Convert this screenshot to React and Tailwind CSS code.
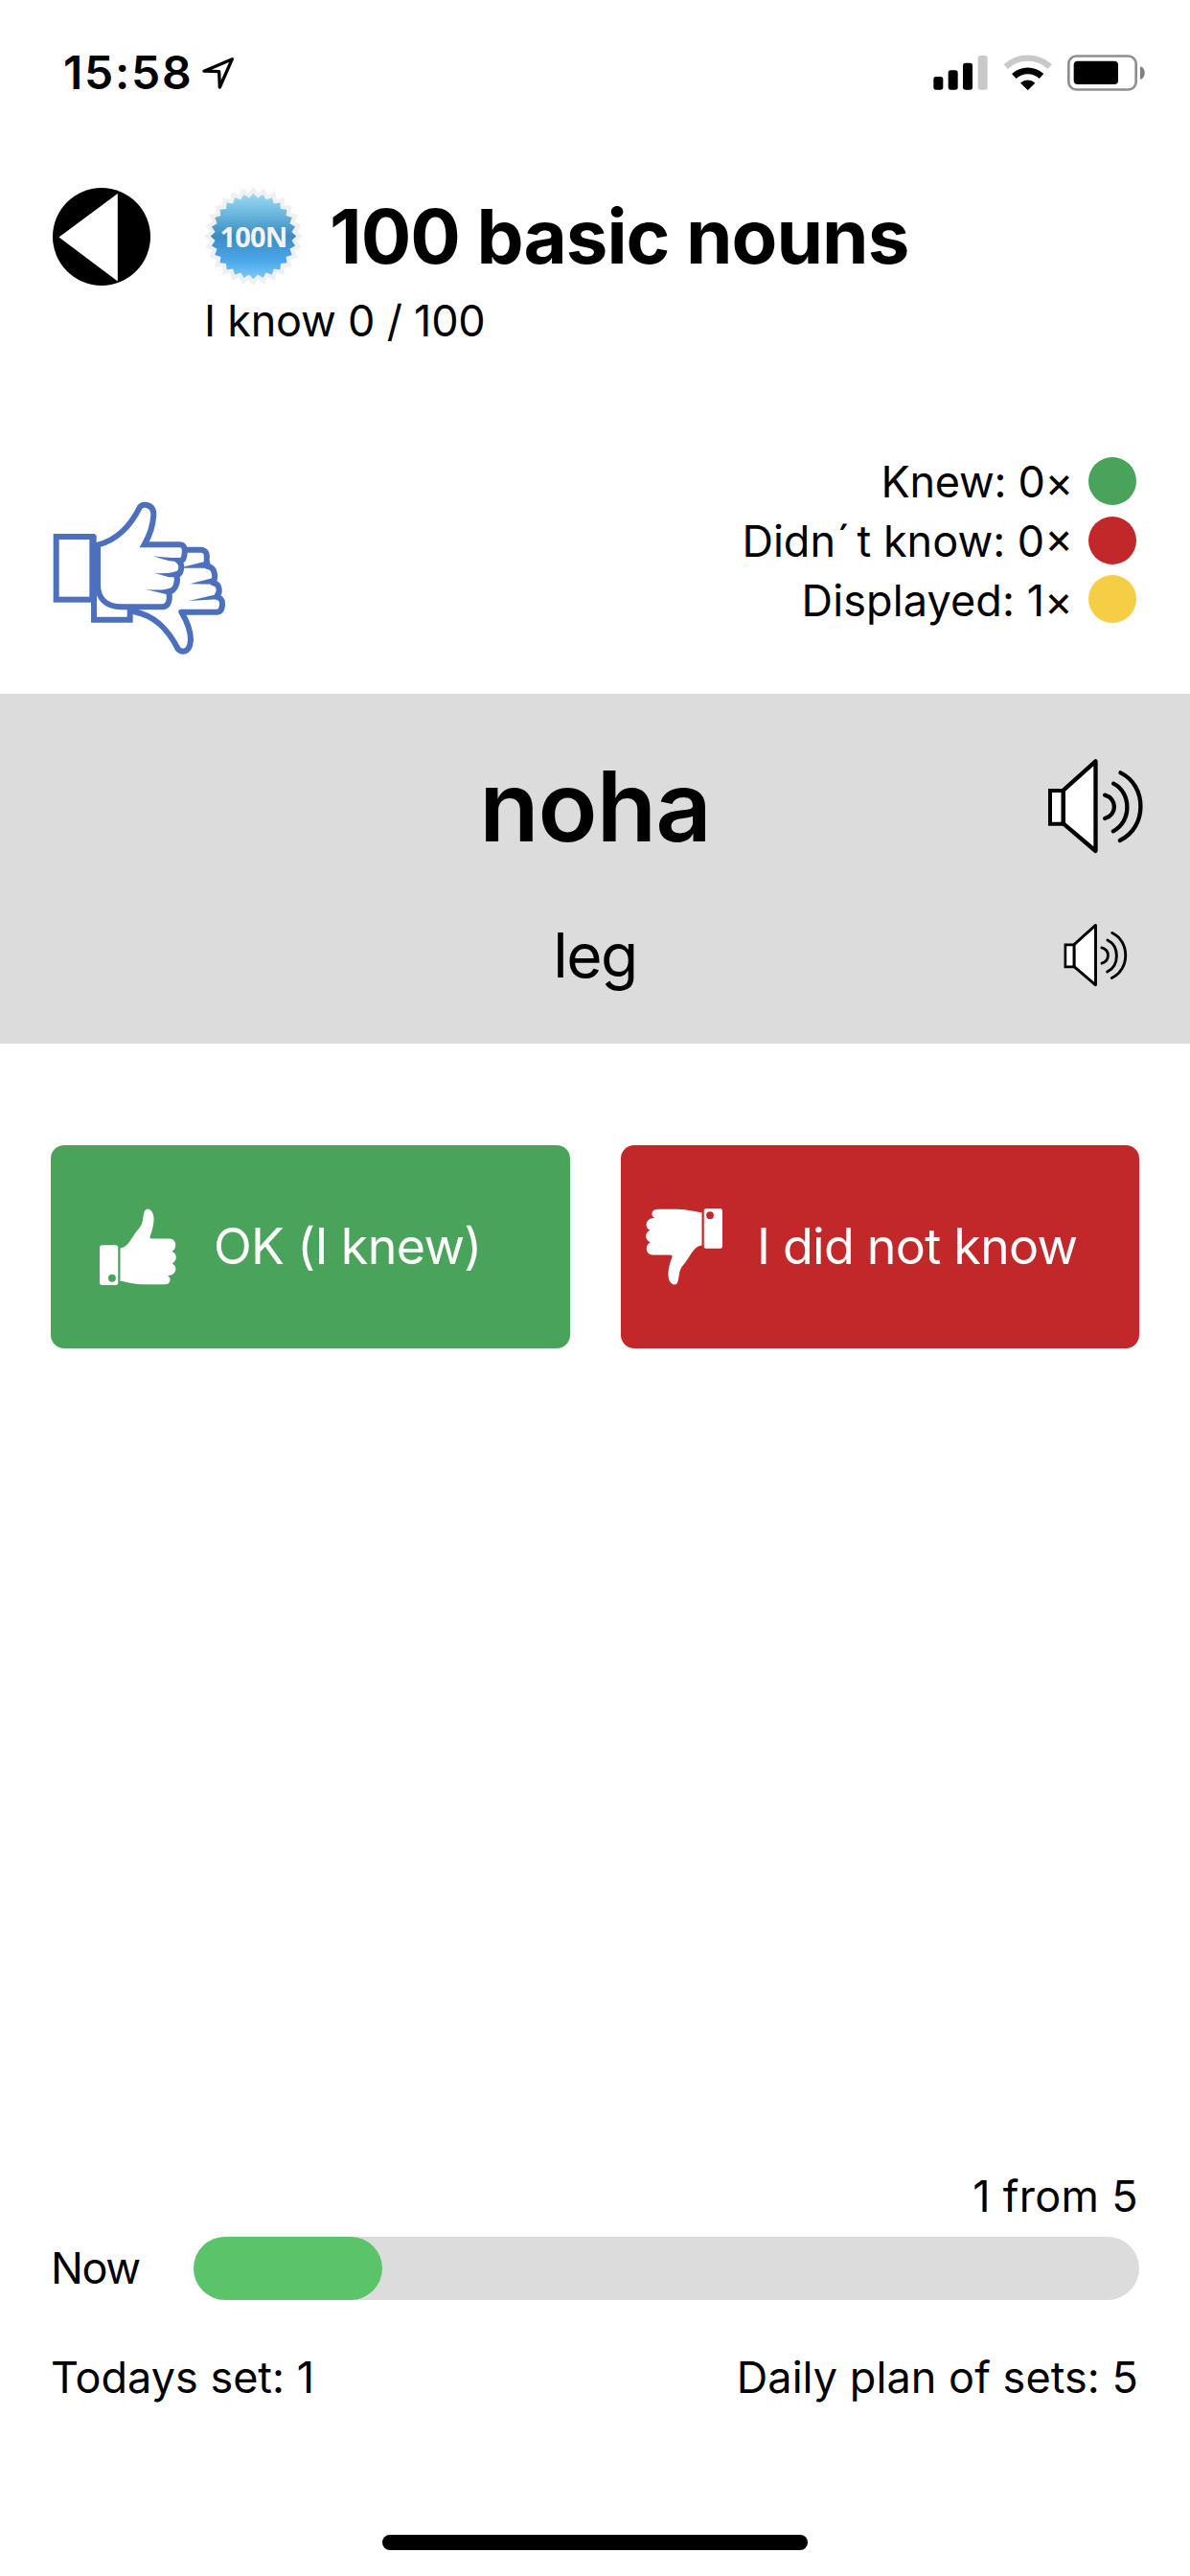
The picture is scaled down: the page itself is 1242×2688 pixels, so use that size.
import React from "react";

const BLUE = "#4c70be";

function LocationArrow() {
  return (
    <svg className="ml-[9px] h-[34px] w-[34px]" viewBox="634 86 102 102" fill="none">
      <path d="M640 131.500L728 94L689 182L687 133Z" stroke="#000" strokeWidth="10" strokeLinejoin="round" />
    </svg>
  );
}

function StatusIcons() {
  return (
    <div className="flex items-center">
      <svg className="h-[38px] w-[58px]" viewBox="100 82 174 114">
        <rect x="101" y="151" width="30" height="41" rx="8" />
        <rect x="147" y="131" width="30" height="61" rx="8" />
        <rect x="193" y="108" width="30" height="84" rx="8" />
        <rect x="240" y="85" width="30" height="107" rx="8" fill="#c9c9c9" />
      </svg>
      <svg className="ml-[15px] h-[38px] w-[51px]" viewBox="319 80 153 114" fill="none">
        <path d="M327 118A101 101 0 0 1 465 118" stroke="#c9c9c9" strokeWidth="19" />
        <path d="M353 147.500A63 63 0 0 1 439 147.500" stroke="#000" strokeWidth="20" />
        <path d="M396 190L374.500 169A33 33 0 0 1 417.500 169Z" fill="#000" stroke="#000" strokeWidth="3" strokeLinejoin="round" />
      </svg>
      <svg className="ml-[16px] h-[38px] w-[82px]" viewBox="522 81 246 114">
        <rect x="526" y="85.500" width="211" height="105" rx="24" fill="none" stroke="#8f8f8f" strokeWidth="8" />
        <rect x="542" y="101" width="139" height="73" rx="12" />
        <path d="M750 118C769 123 769 152 750 159Z" fill="#808080" />
      </svg>
    </div>
  );
}

function starPoints(outer, inner, count) {
  const pts = [];
  for (let i = 0; i < count * 2; i++) {
    const r = i % 2 ? inner : outer;
    const a = (Math.PI * i) / count - Math.PI / 2;
    pts.push(`${(r * Math.cos(a)).toFixed(2)},${(r * Math.sin(a)).toFixed(2)}`);
  }
  return pts.join(" ");
}

function Badge() {
  return (
    <div className="ml-[56px] grid h-[103px] w-[103px] place-items-center">
      <svg className="col-start-1 row-start-1 h-[103px] w-[103px]" viewBox="-51.500 -51.500 103 103">
        <defs>
          <linearGradient id="badge" x1="0" y1="0" x2="0" y2="1">
            <stop offset="0" stopColor="#9bdaf3" />
            <stop offset="0.25" stopColor="#69b5dc" />
            <stop offset="0.5" stopColor="#3c8cc4" />
            <stop offset="0.78" stopColor="#4aa6e8" />
            <stop offset="1" stopColor="#7ccbf8" />
          </linearGradient>
        </defs>
        <polygon points={starPoints(51.5, 45.5, 28)} fill="#f0f0f0" />
        <polygon points={starPoints(44.7, 40.2, 28)} fill="url(#badge)" />
      </svg>
      <span className="col-start-1 row-start-1 font-['Open_Sans'] text-[29px] font-bold leading-none tracking-[-0.8px] text-[#f3f3f3]">
        100N
      </span>
    </div>
  );
}

function ThumbPair() {
  return (
    <svg className="mt-[52px] h-[161px] w-[181px]" viewBox="75 70 543 483" fill="none" strokeLinejoin="miter">
      <g stroke={BLUE} strokeWidth="18">
        <path d="M204 360V441H317V395" />
        <path
          d="M328 415C395 428 435 470 467 532Q476 542 487 540C502 536 506 522 507 505C507 470 492 440 478 417H588C601 417 606 406 606 390C606 376 597 370 588 369C603 352 596 328 578 326C588 300 580 276 560 274C562 268 556 262 557 250C560 232 552 222 538 222H480L400 330Z"
          fill="#fff"
          strokeLinejoin="round"
        />
      </g>
      <g fill={BLUE}>
        <path d="M470 279L560 257L566 279Z" />
        <path d="M505 329L586 308V330Z" />
        <path d="M501 382L594 360V377Z" />
      </g>
      <g stroke={BLUE} strokeWidth="18">
        <rect x="86" y="181" width="113" height="197" fill="#fff" />
        <path
          d="M216 207C270 193 315 155 348 88Q355 80 365 81C384 83 391 95 391 112C389 150 377 180 362 206H472C486 206 490 216 488 232C488 246 482 256 472 260C482 270 479 296 463 303C469 322 460 348 439 355C444 382 436 400 420 401H290C240 400 216 372 216 330Z"
          fill="#fff"
        />
        <path d="M207 176V372" strokeWidth="10" />
      </g>
      <g fill={BLUE}>
        <path d="M389 241C410 246 440 247 478 247L474 266Q460 257 440 257Q420 252 389 241Z" />
        <path d="M393 295Q430 297 450 293L472 286L464 308H440Z" />
        <path d="M366 346Q410 349 428 346L460 337L446 361H430Z" />
      </g>
    </svg>
  );
}

function Speaker({ className }) {
  return (
    <svg className={className} viewBox="100 90 302 300" fill="none" stroke="#000" strokeLinecap="round" strokeLinejoin="round">
      <path d="M150 191L251 100V381L150 295Z" fill="#fff" strokeWidth="13" />
      <path d="M108.500 192H149V296H108.500Z" fill="#fff" strokeWidth="12" strokeLinejoin="miter" />
      <g strokeWidth="13">
        <path d="M280 206C319 217 319 268 280 279" />
        <path d="M307 170C364 198 364 290 306 319" />
        <path d="M329 136C413 176 413 308 327 348" />
      </g>
    </svg>
  );
}

function Thumb({ className }) {
  return (
    <svg className={className} viewBox="172 242 216 241" preserveAspectRatio="none" fill="#fff">
      <path
        fillRule="evenodd"
        d="M180 357H217Q224 357 224 365V475Q224 483 217 483H180Q172 483 172 475V365Q172 357 180 357ZM207 449A10.500 12 0 1 0 207 473A10.500 12 0 1 0 207 449Z"
      />
      <path d="M230 367C253 364 259 338 277 313C296 289 291 285 297 257C299 240 312 239 320 253C330 274 322 306 314 330Q312 336 318 337H369C390 338 391 369 375 377C391 383 392 406 376 415C392 422 391 452 363 454C373 459 372 470 367 476Q364 481 354 481H300C265 480 245 472 230 470Z" />
    </svg>
  );
}

const stats = [
  { id: "knew", text: "Knew: 0×", dot: "bg-[#4aa35b]", tracking: "tracking-[-0.3px]" },
  {
    id: "missed",
    text: (
      <>
        Didn<span className="ml-[1px] mr-[7px]">´</span>t know: 0×
      </>
    ),
    dot: "bg-[#c2272a]",
    tracking: "tracking-normal",
  },
  { id: "shown", text: "Displayed: 1×", dot: "bg-[#f5ce46]", tracking: "tracking-[0.1px]" },
];

export default function App() {
  return (
    <div className="flex h-[2688px] w-[1242px] flex-col overflow-hidden bg-white font-['Inter',sans-serif] text-[45px] leading-[54px] text-black">
      <header className="flex h-[152px] items-center justify-between pl-[66px] pr-[46px]">
        <div className="flex items-center">
          <span className="text-[48px] font-semibold tracking-[1.760px]">15:58</span>
          <LocationArrow />
        </div>
        <StatusIcons />
      </header>

      <div className="mt-[43px] flex h-[103px] items-center pl-[55px]">
        <svg className="h-[102px] w-[102px]" viewBox="0 0 102 102">
          <circle cx="51" cy="51" r="51" />
          <path d="M6.500 51.500L67.800 6V97.500Z" fill="#fff" />
        </svg>
        <Badge />
        <h1 className="ml-[28px] whitespace-nowrap text-[78px] font-bold leading-[94px] tracking-[-0.970px]">100 basic nouns</h1>
      </div>
      <p className="mt-[10px] pl-[213px] tracking-[-0.230px]">I know 0 / 100</p>

      <section className="mt-[109px] flex h-[253px] items-start justify-between pl-[55px] pr-[56px]">
        <ThumbPair />
        <ul>
          {stats.map((s) => (
            <li key={s.id} className="flex h-[61.700px] items-center justify-end">
              <span className={`pt-[3px] ${s.tracking}`}>{s.text}</span>
              <span className={`ml-[16px] h-[50px] w-[50px] rounded-full ${s.dot}`} />
            </li>
          ))}
        </ul>
      </section>

      <section className="h-[365px] bg-[#dcdcdc] pt-[67px]">
        <div className="grid h-[99px] grid-cols-[1fr_auto_1fr] items-center">
          <span className="col-start-2 text-[102px] font-semibold leading-[98px] tracking-[-1px]">noha</span>
          <Speaker className="mr-[48px] h-[100px] w-[101px] justify-self-end" />
        </div>
        <div className="mt-[73px] grid h-[66px] grid-cols-[1fr_auto_1fr] items-center">
          <span className="col-start-2 text-[64px] leading-[66px] tracking-[-1.600px]">leg</span>
          <Speaker className="mr-[65px] h-[67px] w-[67px] justify-self-end" />
        </div>
      </section>

      <div className="mt-[106px] flex gap-[53px] pl-[53px] text-[52px] leading-[62px] text-white">
        <button className="flex h-[212px] w-[542px] items-center rounded-[14px] bg-[#4aa35b] pl-[51px]">
          <Thumb className="h-[80px] w-[80px]" />
          <span className="ml-[39px] tracking-[-0.680px]">OK (I knew)</span>
        </button>
        <button className="flex h-[212px] w-[541px] items-center rounded-[14px] bg-[#c2272a] pl-[26px]">
          <Thumb className="h-[80px] w-[80px] rotate-180" />
          <span className="ml-[36px] tracking-[-0.770px]">I did not know</span>
        </button>
      </div>

      <footer className="mt-auto">
        <p className="pr-[54px] text-right tracking-[0.330px]">1 from 5</p>
        <div className="mt-[15px] flex h-[66px] items-center pl-[53px]">
          <span className="w-[149px] tracking-[-1.440px]">Now</span>
          <div className="h-[66px] w-[987px] rounded-full bg-[#dcdcdc]">
            <div className="h-full w-1/5 rounded-full bg-[#5bc46a]" />
          </div>
        </div>
        <div className="mt-[54px] flex justify-between pl-[53px] pr-[54px]">
          <span>Todays set: 1</span>
          <span className="tracking-[0.060px]">Daily plan of sets: 5</span>
        </div>
        <div className="mx-auto mb-[27px] mt-[137px] h-[16px] w-[444px] rounded-full bg-black" />
      </footer>
    </div>
  );
}
